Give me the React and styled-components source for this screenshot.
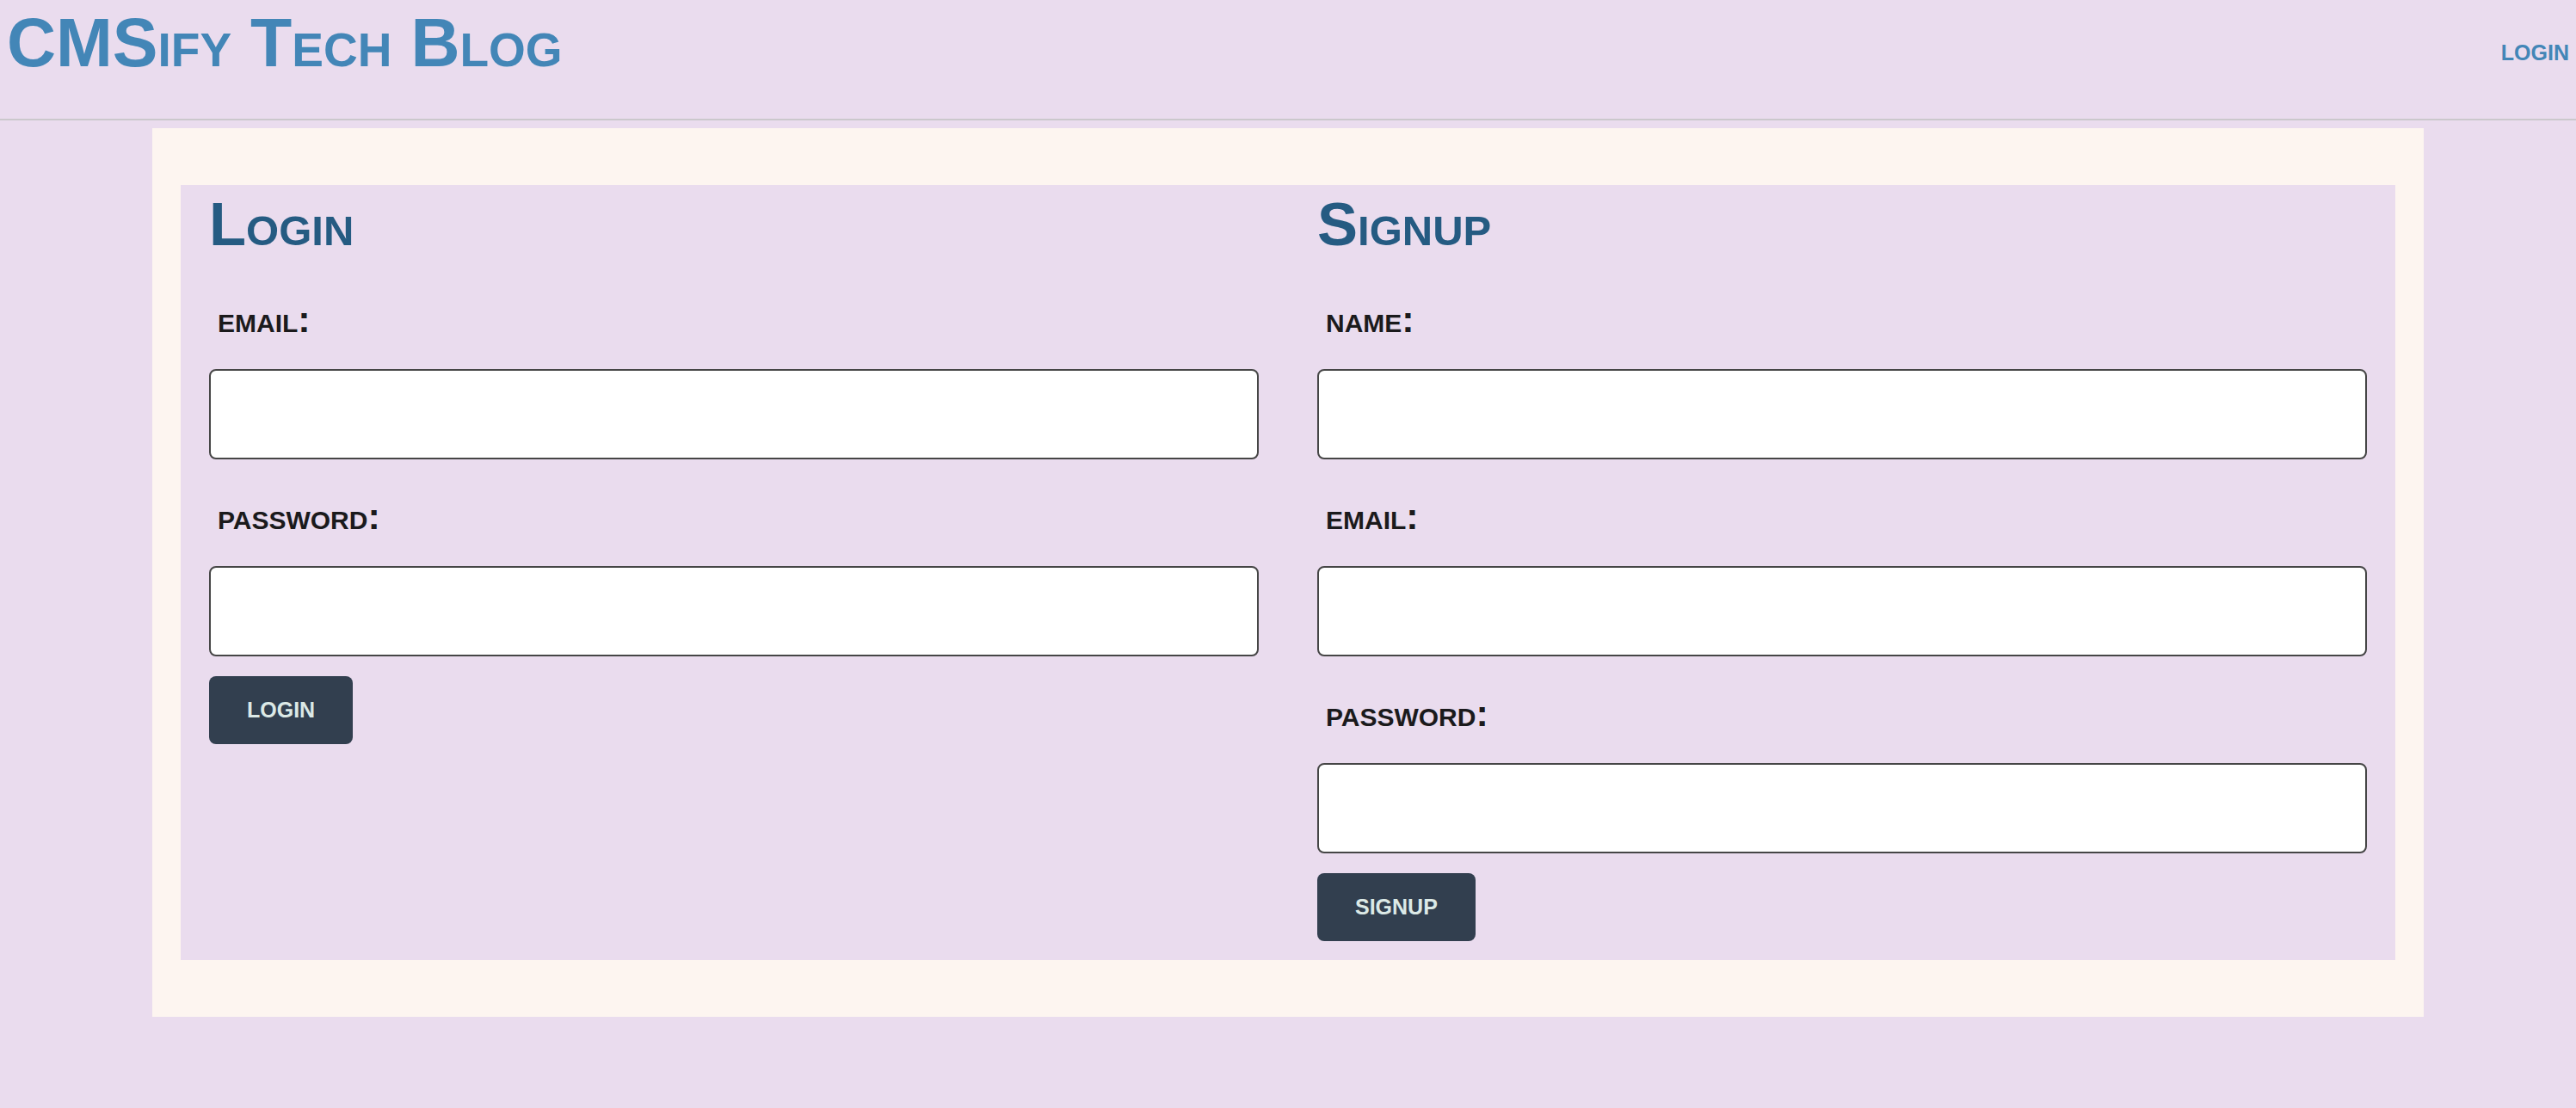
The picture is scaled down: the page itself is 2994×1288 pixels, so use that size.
import React from "react";
import styled, { createGlobalStyle } from "styled-components";

const GlobalStyle = createGlobalStyle`
  body {
    margin: 0;
    background: #eadcee;
    font-family: "Liberation Sans", Arial, sans-serif;
  }
`;

const App = () => {
  return (
    <>
      <GlobalStyle />
      <HeaderWrapper>
        <SiteTitle>CMSify Tech Blog</SiteTitle>
        <NavLink href="#">LOGIN</NavLink>
      </HeaderWrapper>
      <CardWrapper>
        <PanelWrapper>
          <FormColumn>
            <FormTitle>Login</FormTitle>
            <FieldLabel>email:</FieldLabel>
            <FieldInput type="email" />
            <FieldLabel>password:</FieldLabel>
            <FieldInput type="password" />
            <SubmitButton>LOGIN</SubmitButton>
          </FormColumn>
          <FormColumn>
            <FormTitle>Signup</FormTitle>
            <FieldLabel>name:</FieldLabel>
            <FieldInput type="text" />
            <FieldLabel>email:</FieldLabel>
            <FieldInput type="email" />
            <FieldLabel>password:</FieldLabel>
            <FieldInput type="password" />
            <SubmitButton>SIGNUP</SubmitButton>
          </FormColumn>
        </PanelWrapper>
      </CardWrapper>
    </>
  );
};

const HeaderWrapper = styled.header`
  height: 138px;
  padding: 0 8px;
  display: flex;
  justify-content: space-between;
  align-items: flex-start;
  border-bottom: 2px solid #cbc8cc;
`;

const SiteTitle = styled.h1`
  margin: 4px 0 0;
  font-size: 79px;
  line-height: 92px;
  font-weight: bold;
  font-variant: small-caps;
  color: #4386b7;
`;

const NavLink = styled.a`
  margin-top: 47px;
  font-size: 25px;
  font-weight: bold;
  color: #4386b7;
  text-decoration: none;
`;

const CardWrapper = styled.main`
  width: 2640px;
  margin: 9px auto 0;
  padding: 66px 33px;
  box-sizing: border-box;
  background: #fdf5f0;
`;

const PanelWrapper = styled.section`
  background: #eadcee;
  display: grid;
  grid-template-columns: 1fr 1fr;
  column-gap: 68px;
  padding: 0 33px 22px;
`;

const FormColumn = styled.div`
  display: flex;
  flex-direction: column;
  align-items: flex-start;
`;

const FormTitle = styled.h2`
  margin: 5px 0 4px;
  font-size: 70.5px;
  line-height: normal;
  font-weight: bold;
  font-variant: small-caps;
  color: #255b82;
`;

const FieldLabel = styled.label`
  display: block;
  margin: 43px 0 34px 10px;
  font-size: 43px;
  line-height: 47px;
  font-weight: bold;
  font-variant: small-caps;
  color: #1b1a1c;
`;

const FieldInput = styled.input`
  display: block;
  width: 100%;
  height: 105px;
  box-sizing: border-box;
  border: 2px solid #464646;
  border-radius: 8px;
  background: #fff;
  font-size: 24px;
  padding: 0 12px;
`;

const SubmitButton = styled.button`
  margin-top: 23px;
  height: 79px;
  padding: 0 44px;
  border: none;
  border-radius: 8px;
  background: #323f4f;
  color: #dce9e6;
  font-family: "Liberation Sans", Arial, sans-serif;
  font-size: 25px;
  font-weight: bold;
  cursor: pointer;
`;

export default App;
